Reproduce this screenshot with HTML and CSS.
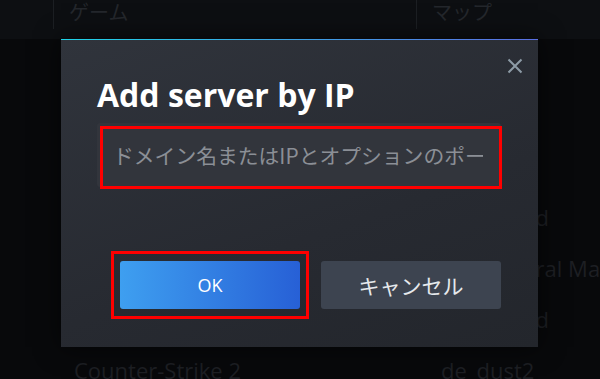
FILE: index.html
```html
<!DOCTYPE html>
<html lang="ja">
  <head>
    <meta charset="UTF-8" />
    <meta name="viewport" content="width=device-width, initial-scale=1.0" />
    <title>Add server by IP</title>
    <link rel="stylesheet" href="styles.css">
  </head>
  <body>
    <!-- server list behind the dialog -->
    <div class="list">
      <div class="list-head">
        <span class="col col-game">ゲーム</span>
        <span class="col col-map">マップ</span>
      </div>
      <div class="row"><span class="cell-game">Counter-Strike 2</span><span class="cell-map">de_nuke</span></div>
      <div class="row"><span class="cell-game">Counter-Strike 2</span><span class="cell-map">de_train</span></div>
      <div class="row"><span class="cell-game">Counter-Strike 2</span><span class="cell-map">cs_italy</span></div>
      <div class="row"><span class="cell-game">Counter-Strike 2</span><span class="cell-map">Wasteland</span></div>
      <div class="row"><span class="cell-game">Counter-Strike 2</span><span class="cell-map">de_Venteral Map</span></div>
      <div class="row"><span class="cell-game">Counter-Strike 2</span><span class="cell-map">Wasteland</span></div>
      <div class="row"><span class="cell-game">Counter-Strike 2</span><span class="cell-map">de_dust2</span></div>
    </div>

    <div class="dialog">
      <button class="close" type="button" aria-label="閉じる">
        <svg width="16" height="16" viewBox="0 0 16 16">
          <path d="M1.5 1.5 L14.5 14.5 M14.5 1.5 L1.5 14.5" stroke="#8d9ba6" stroke-width="2" fill="none" />
        </svg>
      </button>
      <h2 class="title">Add server by IP</h2>
      <div class="field">
        <input type="text" placeholder="ドメイン名またはIPとオプションのポート" />
        <span class="mark mark-field"></span>
      </div>
      <div class="actions">
        <button class="btn btn-ok" type="button">
          OK
          <span class="mark mark-ok"></span>
        </button>
        <button class="btn btn-cancel" type="button">キャンセル</button>
      </div>
    </div>
  </body>
</html>
```

FILE: styles.css
```css
body {
  margin: 0;
  height: 379px;
  overflow: hidden;
  background-color: #08090b;
  font-family: "Open Sans", "Noto Sans CJK JP", sans-serif;
}
.list-head {
  display: flex;
  height: 39px;
  background-color: #0d0f12;
}
.col {
  height: 29px;
  padding-left: 15px;
  border-left: 1px solid #1c1f23;
  color: #24272c;
  font-family: "Noto Sans CJK JP", sans-serif;
  font-size: 20px;
  line-height: 24px;
}
.col-game {
  margin-left: 53px;
  width: 347px;
}
.row {
  display: grid;
  grid-template-columns: 441px 1fr;
  height: 51px;
  line-height: 51px;
  font-size: 22px;
  color: #1d1f23;
  white-space: nowrap;
}
.cell-game {
  padding-left: 74px;
}
.dialog {
  position: absolute;
  left: 61px;
  top: 39px;
  width: 477px;
  height: 308px;
  box-sizing: border-box;
  padding: 38px 37px 0 36px;
  background: linear-gradient(160deg, #30343c 0%, #272a31 60%, #23262c 100%);
  box-shadow: 0 0 24px rgba(0, 0, 0, 0.6);
}
.dialog::before {
  content: "";
  position: absolute;
  top: 0;
  left: 0;
  right: 0;
  height: 1px;
  background: linear-gradient(90deg, #1fd3e6, #5a6fe2);
}
.close {
  position: absolute;
  top: 19px;
  right: 15px;
  width: 16px;
  height: 16px;
  padding: 0;
  border: none;
  background: none;
}
.close svg {
  display: block;
}
.title {
  margin: 0;
  color: #ffffff;
  font-size: 32px;
  font-weight: 700;
  line-height: 36px;
}
.field {
  position: relative;
  margin-top: 10px;
  height: 64px;
}
.field input {
  width: 100%;
  height: 64px;
  box-sizing: border-box;
  padding: 0 18px 0 16px;
  border: none;
  border-radius: 3px;
  background-color: #32353c;
  color: #dfe3e6;
  font-family: "Noto Sans CJK JP", sans-serif;
  font-size: 20.8px;
  outline: none;
}
.field input::placeholder {
  color: #8b8f96;
}
.mark {
  position: absolute;
  border: 3px solid #ff0000;
  pointer-events: none;
}
.mark-field {
  top: 3px;
  left: 3px;
  right: -1px;
  bottom: -2px;
}
.actions {
  display: flex;
  justify-content: flex-end;
  gap: 21px;
  margin-top: 74px;
}
.btn {
  position: relative;
  width: 180px;
  height: 48px;
  padding: 0;
  border: none;
  border-radius: 3px;
  cursor: pointer;
}
.btn-ok {
  background: linear-gradient(90deg, #3e9ff0, #2760d6);
  color: #ffffff;
  font-family: "Open Sans", sans-serif;
  font-size: 18px;
}
.mark-ok {
  top: -10px;
  left: -9px;
  right: -9px;
  bottom: -10px;
}
.btn-cancel {
  background-color: #3d4450;
  color: #e6e9ec;
  font-family: "Noto Sans CJK JP", sans-serif;
  font-size: 21px;
}
```
